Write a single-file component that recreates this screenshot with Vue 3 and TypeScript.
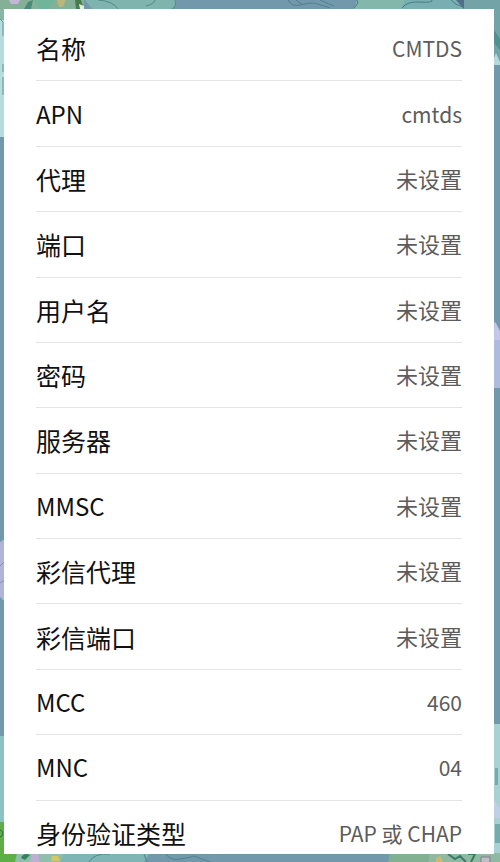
<script setup lang="ts">
interface Setting {
  label: string
  value: string
}

const settings: Setting[] = [
  { label: '名称', value: 'CMTDS' },
  { label: 'APN', value: 'cmtds' },
  { label: '代理', value: '未设置' },
  { label: '端口', value: '未设置' },
  { label: '用户名', value: '未设置' },
  { label: '密码', value: '未设置' },
  { label: '服务器', value: '未设置' },
  { label: 'MMSC', value: '未设置' },
  { label: '彩信代理', value: '未设置' },
  { label: '彩信端口', value: '未设置' },
  { label: 'MCC', value: '460' },
  { label: 'MNC', value: '04' },
  { label: '身份验证类型', value: 'PAP 或 CHAP' },
]

const hasLatin = (text: string): boolean => /[A-Za-z0-9]/.test(text)
</script>

<template>
  <main class="page">
    <svg class="backdrop" viewBox="0 0 500 862" preserveAspectRatio="none" aria-hidden="true">
      <rect width="500" height="862" fill="#7199ab" />

      <!-- flowers and leaves along the top -->
      <path d="M0 0H84V9H0Z" fill="#84b096" />
      <path d="M9 0H20L18 4H11Z" fill="#c5b3dc" />
      <path d="M24 9L28 2L33 0L31 9Z" fill="#4a8a78" />
      <path d="M34 0H54L48 9H40Z" fill="#70b49c" />
      <path d="M57 0H66L63 7H59Z" fill="#b9b67c" />
      <path d="M75 0H81L84 9H76Z" fill="#477c50" />
      <path d="M79 4L84 6V9H80Z" fill="#e6efd8" />
      <path d="M85 0H176Q177 6 172 9H92Z" fill="#7fb3ad" />
      <path d="M98 0Q113 1 118 9M155 0Q154 4 146 6M175 0Q177 6 172 9" fill="none" stroke="#4d8b8e" />
      <path d="M288 0Q292 7 300 5T312 3T330 8M296 0L303 5M320 0L334 6" fill="none" stroke="#527f91" />
      <path d="M357 0H405L402 9H354Z" fill="#83b7ac" />
      <path d="M405 0H460L463 9H402Z" fill="#79afb2" />
      <path d="M354 8L358 3L357 0M402 8Q407 1 420 2T432 0M451 0Q455 5 463 7" fill="none" stroke="#467f85" />
      <path d="M456 0H464V9Z" fill="#526f87" />
      <path d="M464 0H500V65H494V9H464Z" fill="#73a3a6" />
      <path d="M494 30L500 39V50L494 43Z" fill="#4f9290" />
      <path d="M494 65V58L496 53L500 62V65Z" fill="#b8d9dc" />

      <!-- left edge -->
      <path d="M0 9H5V137H0Z" fill="#b5dddd" />
      <path d="M0 9H5V20H0Z" fill="#86b7a5" />
      <path d="M0 19L3 22V36M3 64V72M3 77V95" fill="none" stroke="#5f9a9c" />
      <path d="M0 542L5 539V602L0 597Z" fill="#b0b5d8" />
      <path d="M0 566L5 561M0 583L5 580" stroke="#8d8fb9" />
      <path d="M0 736H5V830H0Z" fill="#8bc3c3" />

      <!-- right edge -->
      <path d="M494 322L496 323L500 331V388H494Z" fill="#aebbdc" />
      <path d="M495 322L500 332V340H494Z" fill="#c5c7ea" />
      <path d="M494 724H500V862H494Z" fill="#a9d0d2" />
      <path d="M495 768H498V785H495ZM495 824H500V843H495Z" fill="#76aaad" />
      <path d="M494 800L500 808V818H494Z" fill="#bfcfe5" />

      <!-- flowers and leaves along the bottom -->
      <path d="M0 822H5V853H18L15 862H0Z" fill="#5eae48" />
      <path d="M0 830Q4 831 2 836L0 837" fill="none" stroke="#2f7050" />
      <path d="M17 853H64V862H15Z" fill="#8fbfac" />
      <path d="M21 858Q24 852 30 855L25 860Z" fill="#337f60" />
      <path d="M32 854H38L40 862H30Z" fill="#bdb0d2" />
      <path d="M52 856H58L60 861H51Z" fill="#d6c66b" />
      <path d="M64 853H150L144 862H60Z" fill="#80b5b5" />
      <path d="M89 862Q94 853 110 854M144 854L147 862M166 854Q170 861 181 859T194 856L210 862" fill="none" stroke="#4c8492" />
      <path d="M390 853H430V862H388Z" fill="#82b093" />
      <path d="M430 853H500V862H428Z" fill="#8fb9a1" />
      <path d="M436 858L440 856L443 862H436Z" fill="#c9ba78" />
      <path d="M448 854L455 859L460 856L466 862M468 854H475L471 862" fill="none" stroke="#397a68" stroke-width="2" />
      <path d="M481 862V857H490V862" fill="#c1bdc5" stroke="#827e90" />
    </svg>
    <section class="card">
      <dl class="list">
        <div v-for="item in settings" :key="item.label" class="row">
          <dt class="label" :class="{ latin: hasLatin(item.label) }">{{ item.label }}</dt>
          <dd class="value" :class="{ latin: hasLatin(item.value) }">{{ item.value }}</dd>
        </div>
      </dl>
    </section>
  </main>
</template>

<style>
body {
  margin: 0;
}
</style>

<style scoped>
.page {
  position: relative;
  box-sizing: border-box;
  display: flex;
  min-height: 100vh;
  padding: 9px 6px 8px 4px;
  background: #7199ab;
  font-family: "Noto Sans CJK SC", sans-serif;
}
.backdrop {
  position: absolute;
  inset: 0;
  width: 100%;
  height: 100%;
}
.card {
  position: relative;
  flex: 1;
  display: flex;
  box-sizing: border-box;
  overflow: hidden;
  padding: 7px 32px 0;
  background: #fff;
}
.list {
  flex: 1;
  display: grid;
  grid-auto-rows: 1fr;
  margin: 0 0 -12px;
}
.row {
  display: flex;
  align-items: center;
  justify-content: space-between;
  gap: 16px;
  border-bottom: 1px solid #e4e4e4;
}
.row:last-child {
  border-bottom-color: transparent;
}
.label {
  color: #111;
  font-size: 25px;
  line-height: 36px;
}
.label.latin {
  font-size: 24px;
}
.value {
  margin: 0;
  padding-bottom: 2px;
  color: #5c5c5c;
  font-size: 22px;
  line-height: 36px;
  text-align: right;
}
.value.latin {
  padding-bottom: 0;
  font-size: 21px;
}
</style>
